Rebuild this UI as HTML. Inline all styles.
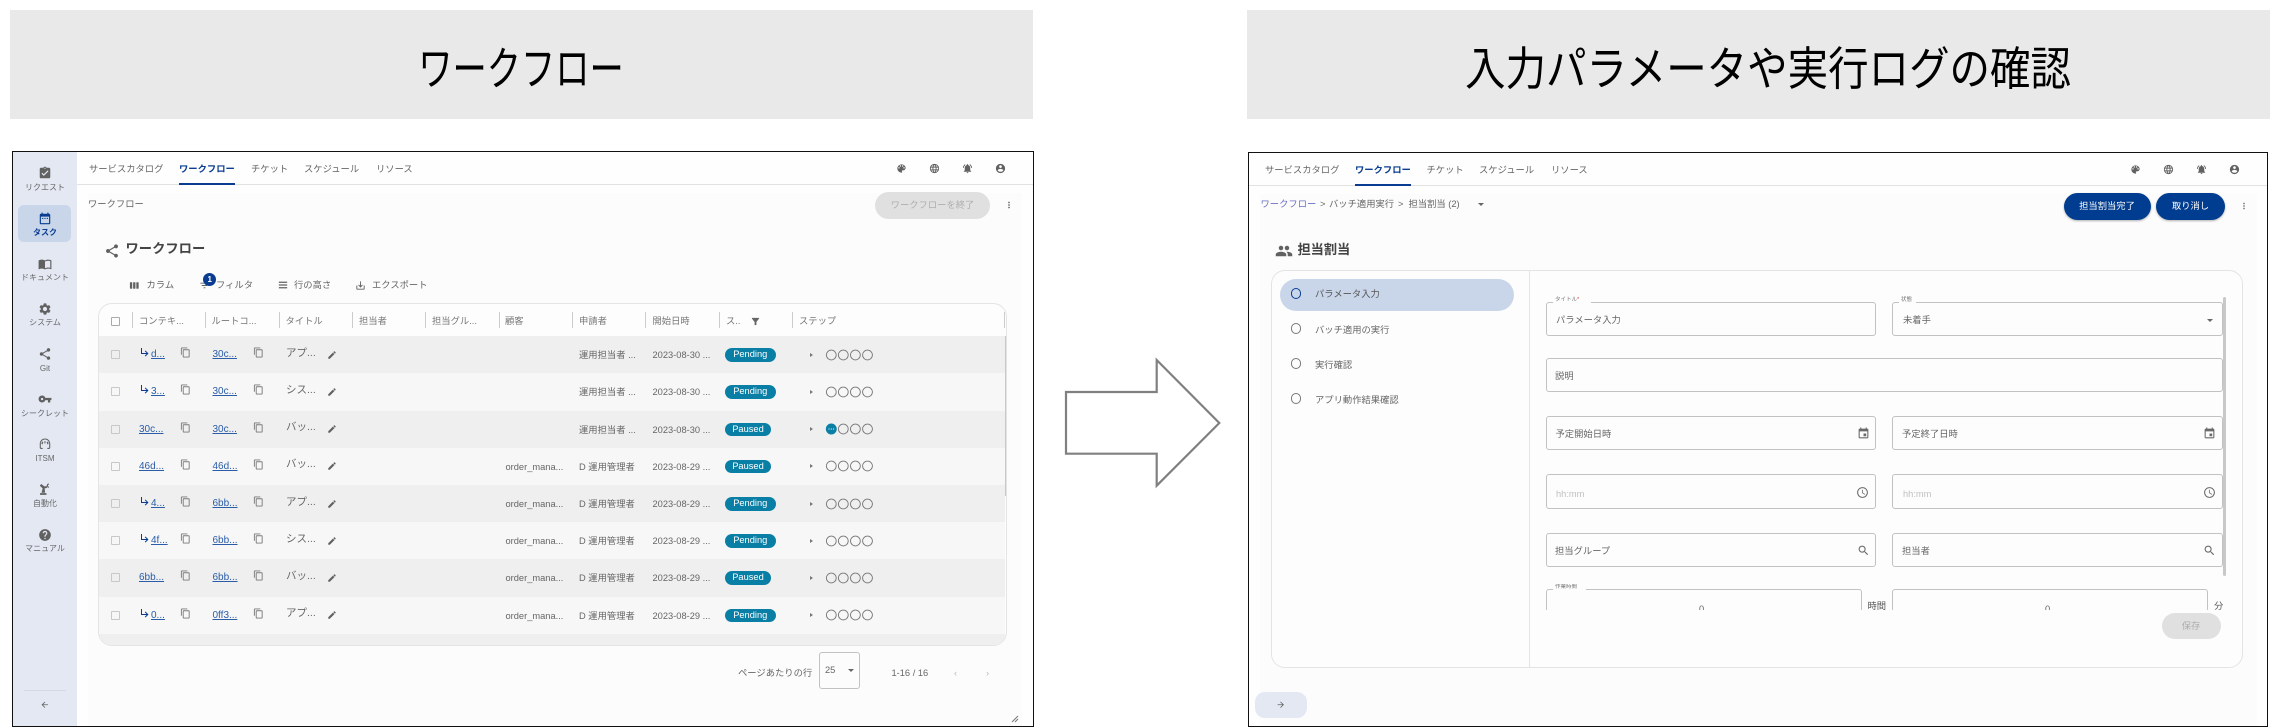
<!DOCTYPE html>
<html lang="ja">
<head>
<meta charset="utf-8">
<title>ワークフロー</title>
<style>
html,body{margin:0;padding:0;background:#fff}
body{position:relative;width:2280px;height:728px;overflow:hidden;font-family:"Liberation Sans","Noto Sans CJK JP",sans-serif;font-size:9.3px;color:#666}
div,span,svg{position:absolute;box-sizing:border-box}
svg{fill:currentColor;display:block}
.t{white-space:nowrap;line-height:12px;height:12px}
.band{background:#e9e9e9;top:10px;height:109px}
.title{white-space:nowrap;color:#000;font-size:46px;line-height:56px;height:56px;top:38px;font-family:"Noto Sans CJK JP",sans-serif;text-align:center;width:800px}
.frame{border:1.5px solid #111;top:151px;height:576px;background:#fefefe}
.side{left:13px;top:152px;width:64px;height:574px;background:#e3e8f3}
.sl{left:13px;width:64px;text-align:center;font-size:8px;color:#666;white-space:nowrap;line-height:10px;height:10px}
.si{width:14px;height:14px;left:38px;color:#616161}
.tab{top:163px;color:#666}
.act{color:#0a3d91;font-weight:bold}
.ti{width:11px;height:11px;color:#616161}
.table{left:98px;top:303px;width:909px;height:343px;border:1px solid #e4e4e4;border-radius:14px;overflow:hidden;background:#fdfdfd}
.sep{top:8px;width:1px;height:16px;background:#ccc}
.h{top:11px;color:#777}
.row{left:0;width:906px;height:37.4px}
.o{background:#efefef}.e{background:#f7f7f7}
.cb{width:9px;height:9px;left:12px;border:1px solid #c8c8c8;border-radius:1px}
.r{top:13px}
.tt{top:10.5px;left:187px;font-size:10.500px;color:#666}
.lk{color:#2a5ca8;text-decoration:underline;top:13px;font-size:10px}
.cp{width:11px;height:11px;top:11px;color:#7a7a7a}
.ed{width:10px;height:10px;left:228px;top:13.5px;color:#616161}
.ar{width:12px;height:12px;left:39.5px;top:10px;color:#0a3d91}
.chip{left:626px;top:12px;height:13.5px;border-radius:7px;background:#0a7fa6;color:#fff;text-align:center;line-height:13.5px;font-size:9.3px}
.car{left:711px;top:16.5px;width:0;height:0;border-left:3px solid #777;border-top:2.5px solid transparent;border-bottom:2.5px solid transparent}
.st{left:726px;top:12.5px;width:50px;height:12px;fill:none;stroke:#777;stroke-width:.9}
.fd{border:1px solid #c2c2c2;border-radius:3px;background:#fdfdfd}
.lbl{font-size:5.5px;line-height:7px;height:7px;white-space:nowrap;color:#777;background:#fdfdfd;padding:0 2px}
.fi{width:13px;height:13px;color:#6a6a6a}
</style>
</head>
<body>
<svg width="0" height="0" style="left:0;top:0">
<defs>
<symbol id="assign" viewBox="0 0 24 24"><path d="M19 3h-4.18C14.4 1.84 13.3 1 12 1c-1.3 0-2.4.84-2.82 2H5c-1.1 0-2 .9-2 2v14c0 1.1.9 2 2 2h14c1.1 0 2-.9 2-2V5c0-1.1-.9-2-2-2zm-7 0c.55 0 1 .45 1 1s-.45 1-1 1-1-.45-1-1 .45-1 1-1zm-2 14l-4-4 1.41-1.41L10 14.17l6.59-6.59L18 9l-8 8z"/></symbol>
<symbol id="cal" viewBox="0 0 24 24"><path d="M17 12h-5v5h5v-5zM16 1v2H8V1H6v2H5c-1.11 0-1.99.9-1.99 2L3 19c0 1.1.89 2 2 2h14c1.1 0 2-.9 2-2V5c0-1.1-.9-2-2-2h-1V1h-2zm3 18H5V8h14v11z"/></symbol>
<symbol id="cal2" viewBox="0 0 24 24"><path d="M16 1v2H8V1H6v2H5c-1.11 0-1.99.9-1.99 2L3 19c0 1.1.89 2 2 2h14c1.1 0 2-.9 2-2V5c0-1.1-.9-2-2-2h-1V1h-2zm3 18H5V8h14v11zM7 10h2v2H7zm4 0h2v2h-2zm4 0h2v2h-2z"/></symbol>
<symbol id="book" viewBox="0 0 24 24"><path d="M21 5c-1.11-.35-2.33-.5-3.5-.5-1.95 0-4.05.4-5.5 1.5-1.45-1.1-3.55-1.5-5.5-1.5S2.45 4.9 1 6v14.65c0 .25.25.5.5.5.1 0 .15-.05.25-.05C3.1 20.45 5.05 20 6.5 20c1.95 0 4.05.4 5.5 1.5 1.35-.85 3.8-1.5 5.5-1.5 1.65 0 3.35.3 4.75 1.05.1.05.15.05.25.05.25 0 .5-.25.5-.5V6c-.6-.45-1.25-.75-2-1zm0 13.5c-1.1-.35-2.3-.5-3.5-.5-1.7 0-4.15.65-5.5 1.5V8c1.35-.85 3.8-1.5 5.5-1.5 1.2 0 2.4.15 3.5.5v11.5z"/></symbol>
<symbol id="gear" viewBox="0 0 24 24"><path d="M19.14 12.94c.04-.3.06-.61.06-.94 0-.32-.02-.64-.07-.94l2.03-1.58c.18-.14.23-.41.12-.61l-1.92-3.32c-.12-.22-.37-.29-.59-.22l-2.39.96c-.5-.38-1.03-.7-1.62-.94l-.36-2.54c-.04-.24-.24-.41-.48-.41h-3.84c-.24 0-.43.17-.47.41l-.36 2.54c-.59.24-1.13.57-1.62.94l-2.39-.96c-.22-.08-.47 0-.59.22L2.74 8.87c-.12.21-.08.47.12.61l2.03 1.58c-.05.3-.09.63-.09.94s.02.64.07.94l-2.03 1.58c-.18.14-.23.41-.12.61l1.92 3.32c.12.22.37.29.59.22l2.39-.96c.5.38 1.03.7 1.62.94l.36 2.54c.05.24.24.41.48.41h3.84c.24 0 .44-.17.47-.41l.36-2.54c.59-.24 1.13-.56 1.62-.94l2.39.96c.22.08.47 0 .59-.22l1.92-3.32c.12-.22.07-.47-.12-.61l-2.01-1.58zM12 15.6c-1.98 0-3.6-1.62-3.6-3.6s1.62-3.6 3.6-3.6 3.6 1.62 3.6 3.6-1.62 3.6-3.6 3.6z"/></symbol>
<symbol id="share" viewBox="0 0 24 24"><path d="M18 16.08c-.76 0-1.44.3-1.96.77L8.91 12.7c.05-.23.09-.46.09-.7s-.04-.47-.09-.7l7.05-4.11c.54.5 1.25.81 2.04.81 1.66 0 3-1.34 3-3s-1.34-3-3-3-3 1.34-3 3c0 .24.04.47.09.7L8.04 9.81C7.5 9.31 6.79 9 6 9c-1.66 0-3 1.34-3 3s1.34 3 3 3c.79 0 1.5-.31 2.04-.81l7.12 4.16c-.05.21-.08.43-.08.65 0 1.61 1.31 2.92 2.92 2.92 1.61 0 2.92-1.31 2.92-2.92s-1.31-2.92-2.92-2.92z"/></symbol>
<symbol id="key" viewBox="0 0 24 24"><path d="M12.65 10C11.83 7.67 9.61 6 7 6c-3.31 0-6 2.69-6 6s2.69 6 6 6c2.61 0 4.83-1.67 5.65-4H17v4h4v-4h2v-4H12.65zM7 14c-1.1 0-2-.9-2-2s.9-2 2-2 2 .9 2 2-.9 2-2 2z"/></symbol>
<symbol id="help" viewBox="0 0 24 24"><path d="M12 2C6.48 2 2 6.48 2 12s4.48 10 10 10 10-4.48 10-10S17.52 2 12 2zm1 17h-2v-2h2v2zm2.07-7.75l-.9.92C13.45 12.9 13 13.5 13 15h-2v-.5c0-1.1.45-2.1 1.17-2.83l1.24-1.26c.37-.36.59-.86.59-1.41 0-1.1-.9-2-2-2s-2 .9-2 2H8c0-2.21 1.79-4 4-4s4 1.79 4 4c0 .88-.36 1.68-.93 2.25z"/></symbol>
<symbol id="pal" viewBox="0 0 24 24"><path d="M12 3c-4.97 0-9 4.03-9 9s4.03 9 9 9c.83 0 1.5-.67 1.5-1.5 0-.39-.15-.74-.39-1.01-.23-.26-.38-.61-.38-.99 0-.83.67-1.5 1.5-1.5H16c2.76 0 5-2.24 5-5 0-4.42-4.03-8-9-8zm-5.5 9c-.83 0-1.5-.67-1.5-1.5S5.67 9 6.5 9 8 9.67 8 10.5 7.33 12 6.5 12zm3-4C8.67 8 8 7.33 8 6.5S8.67 5 9.5 5s1.5.67 1.5 1.5S10.33 8 9.5 8zm5 0c-.83 0-1.5-.67-1.5-1.5S13.67 5 14.5 5s1.5.67 1.5 1.5S15.33 8 14.5 8zm3 4c-.83 0-1.5-.67-1.5-1.5S16.67 9 17.5 9s1.5.67 1.5 1.5-.67 1.5-1.5 1.5z"/></symbol>
<symbol id="globe" viewBox="0 0 24 24"><path d="M11.99 2C6.47 2 2 6.48 2 12s4.47 10 9.99 10C17.52 22 22 17.52 22 12S17.52 2 11.99 2zm6.93 6h-2.95c-.32-1.25-.78-2.45-1.38-3.56 1.84.63 3.37 1.91 4.33 3.56zM12 4.04c.83 1.2 1.48 2.53 1.91 3.96h-3.82c.43-1.43 1.08-2.76 1.91-3.96zM4.26 14C4.1 13.36 4 12.69 4 12s.1-1.36.26-2h3.38c-.08.66-.14 1.32-.14 2 0 .68.06 1.34.14 2H4.26zm.82 2h2.95c.32 1.25.78 2.45 1.38 3.56-1.84-.63-3.37-1.9-4.33-3.56zm2.95-8H5.08c.96-1.66 2.49-2.93 4.33-3.56C8.81 5.55 8.35 6.75 8.03 8zM12 19.96c-.83-1.2-1.48-2.53-1.91-3.96h3.82c-.43 1.43-1.08 2.76-1.91 3.96zM14.34 14H9.66c-.09-.66-.16-1.32-.16-2 0-.68.07-1.35.16-2h4.68c.09.65.16 1.32.16 2 0 .68-.07 1.34-.16 2zm.25 5.56c.6-1.11 1.06-2.31 1.38-3.56h2.95c-.96 1.65-2.49 2.93-4.33 3.56zM16.36 14c.08-.66.14-1.32.14-2 0-.68-.06-1.34-.14-2h3.38c.16.64.26 1.31.26 2s-.1 1.36-.26 2h-3.38z"/></symbol>
<symbol id="bell" viewBox="0 0 24 24"><path d="M7.58 4.08L6.15 2.65C3.75 4.48 2.17 7.3 2.03 10.5h2c.15-2.65 1.51-4.97 3.55-6.42zm12.39 6.42h2c-.15-3.2-1.73-6.02-4.12-7.85l-1.42 1.43c2.02 1.45 3.39 3.77 3.54 6.42zM18 11c0-3.07-1.64-5.64-4.5-6.32V4c0-.83-.67-1.5-1.5-1.5s-1.5.67-1.5 1.5v.68C7.63 5.36 6 7.92 6 11v5l-2 2v1h16v-1l-2-2v-5zm-6 11c.14 0 .27-.01.4-.04.65-.14 1.18-.58 1.44-1.18.1-.24.15-.5.15-.78h-4c.01 1.1.9 2 2.01 2z"/></symbol>
<symbol id="acct" viewBox="0 0 24 24"><path d="M12 2C6.48 2 2 6.48 2 12s4.48 10 10 10 10-4.48 10-10S17.52 2 12 2zm0 3c1.66 0 3 1.34 3 3s-1.34 3-3 3-3-1.34-3-3 1.34-3 3-3zm0 14.2c-2.5 0-4.71-1.28-6-3.22.03-1.99 4-3.08 6-3.08 1.99 0 5.97 1.09 6 3.08-1.29 1.94-3.5 3.22-6 3.22z"/></symbol>
<symbol id="week" viewBox="0 0 24 24"><path d="M6 5H3c-.55 0-1 .45-1 1v12c0 .55.45 1 1 1h3c.55 0 1-.45 1-1V6c0-.55-.45-1-1-1zm14 0h-3c-.55 0-1 .45-1 1v12c0 .55.45 1 1 1h3c.55 0 1-.45 1-1V6c0-.55-.45-1-1-1zm-7 0h-3c-.55 0-1 .45-1 1v12c0 .55.45 1 1 1h3c.55 0 1-.45 1-1V6c0-.55-.45-1-1-1z"/></symbol>
<symbol id="flist" viewBox="0 0 24 24"><path d="M10 18h4v-2h-4v2zM3 6v2h18V6H3zm3 7h12v-2H6v2z"/></symbol>
<symbol id="funnel" viewBox="0 0 24 24"><path d="M4.25 5.61C6.27 8.2 10 13 10 13v6c0 .55.45 1 1 1h2c.55 0 1-.45 1-1v-6s3.72-4.8 5.74-7.39c.51-.66.04-1.61-.79-1.61H5.04c-.83 0-1.3.95-.79 1.61z"/></symbol>
<symbol id="dens" viewBox="0 0 24 24"><path d="M2 20h20v-3H2v3zm0-6.500h20v-3H2v3zM2 4v3h20V4H2z"/></symbol>
<symbol id="dl" viewBox="0 0 24 24"><path d="M19 12v7H5v-7H3v7c0 1.1.9 2 2 2h14c1.1 0 2-.9 2-2v-7h-2zm-6 .67l2.59-2.58L17 11.5l-5 5-5-5 1.41-1.41L11 12.67V3h2z"/></symbol>
<symbol id="copy" viewBox="0 0 24 24"><path d="M16 1H4c-1.1 0-2 .9-2 2v14h2V3h12V1zm3 4H8c-1.1 0-2 .9-2 2v14c0 1.1.9 2 2 2h11c1.1 0 2-.9 2-2V7c0-1.1-.9-2-2-2zm0 16H8V7h11v14z"/></symbol>
<symbol id="edit" viewBox="0 0 24 24"><path d="M3 17.250V21h3.750L17.810 9.940l-3.750-3.750L3 17.250zM20.710 7.040c.39-.39.39-1.020 0-1.410l-2.340-2.340c-.39-.39-1.020-.39-1.410 0l-1.830 1.830 3.750 3.750 1.830-1.830z"/></symbol>
<symbol id="sub" viewBox="0 0 24 24"><path d="M19 15l-6 6-1.420-1.420L15.170 16H4V4h2v10h9.170l-3.590-3.580L13 9l6 6z"/></symbol>
<symbol id="ppl" viewBox="0 0 24 24"><path d="M16 11c1.660 0 2.990-1.340 2.990-3S17.660 5 16 5c-1.660 0-3 1.340-3 3s1.340 3 3 3zm-8 0c1.660 0 2.990-1.340 2.990-3S9.660 5 8 5C6.340 5 5 6.340 5 8s1.340 3 3 3zm0 2c-2.330 0-7 1.170-7 3.500V19h14v-2.500c0-2.330-4.670-3.500-7-3.500zm8 0c-.290 0-.620.020-.970.050 1.160.840 1.970 1.970 1.970 3.450V19h6v-2.500c0-2.330-4.670-3.500-7-3.500z"/></symbol>
<symbol id="clock" viewBox="0 0 24 24"><path d="M11.990 2C6.470 2 2 6.480 2 12s4.470 10 9.990 10C17.520 22 22 17.520 22 12S17.520 2 11.990 2zM12 20c-4.420 0-8-3.580-8-8s3.580-8 8-8 8 3.580 8 8-3.580 8-8 8zm.5-13H11v6l5.250 3.150.750-1.230-4.500-2.670z"/></symbol>
<symbol id="search" viewBox="0 0 24 24"><path d="M15.500 14h-.790l-.280-.270C15.410 12.590 16 11.110 16 9.500 16 5.910 13.090 3 9.500 3S3 5.910 3 9.500 5.910 16 9.500 16c1.610 0 3.090-.590 4.230-1.570l.270.280v.790l5 4.990L20.490 19l-4.990-5zm-6 0C7.010 14 5 11.990 5 9.500S7.010 5 9.500 5 14 7.010 14 9.500 11.990 14 9.500 14z"/></symbol>
<symbol id="more" viewBox="0 0 24 24"><path d="M12 8c1.100 0 2-.9 2-2s-.9-2-2-2-2 .9-2 2 .9 2 2 2zm0 2c-1.100 0-2 .9-2 2s.9 2 2 2 2-.9 2-2-.9-2-2-2zm0 6c-1.100 0-2 .9-2 2s.9 2 2 2 2-.9 2-2-.9-2-2-2z"/></symbol>
<symbol id="back" viewBox="0 0 24 24"><path d="M20 11H7.830l5.590-5.590L12 4l-8 8 8 8 1.410-1.410L7.830 13H20v-2z"/></symbol>
<symbol id="fwd" viewBox="0 0 24 24"><path d="M12 4l-1.410 1.410L16.170 11H4v2h12.170l-5.580 5.590L12 20l8-8z"/></symbol>
<symbol id="head" viewBox="0 0 24 24"><path d="M12 2.500C6.800 2.500 3 6.600 3 12v6c0 1.400 1 2.500 2.500 2.500H8v-1.800H5.500c-.4 0-.7-.3-.7-.7v-6C4.800 7.600 8 4.300 12 4.300s7.200 3.300 7.200 7.700v6c0 .4-.3.700-.7.700H16v1.800h2.500c1.500 0 2.500-1.100 2.500-2.500v-6c0-5.400-3.800-9.500-9-9.500zM7.500 7.800C6.500 9 6 10.400 6 12l2 .8c0-1.300.5-2.500 1.200-3.500zm9 0l-1.700 1.500c.7 1 1.200 2.200 1.200 3.500l2-.8c0-1.600-.5-3-1.500-4.200zM12 6.800c-.5 0-.9.400-.9.900v2.600c0 .5.400.9.900.9s.9-.4.900-.9V7.700c0-.5-.4-.9-.9-.9z"/></symbol>
<symbol id="robot" viewBox="0 0 24 24"><path d="M3.500 19h11v3h-11zM6 18.500L8 11 3 6.500 5.500 3.500l5.500 4 4.500-.5v3l-4 1L12 18.500zM18.500 2.500a3.700 3.700 0 1 0 .2 7.400l.4-1.700a2 2 0 1 1-.2-4z"/></symbol>
<symbol id="steps" viewBox="0 0 50 12"><circle cx="6.300" cy="6" r="4.900"/><circle cx="18.300" cy="6" r="4.900"/><circle cx="30.400" cy="6" r="4.900"/><circle cx="42.500" cy="6" r="4.900"/></symbol>
<symbol id="steps2" viewBox="0 0 50 12"><circle cx="6.300" cy="6" r="5" fill="#0a7fa6" stroke="#0a7fa6"/><path d="M3.500 6h1M5.800 6h1M8.100 6h1" stroke="#fff" stroke-width="1"/><circle cx="18.300" cy="6" r="4.900"/><circle cx="30.400" cy="6" r="4.900"/><circle cx="42.500" cy="6" r="4.900"/></symbol>
</defs>
</svg>

<!-- title bands -->
<div class="band" style="left:10px;width:1023px"></div>
<div class="title" style="left:121px;transform:scaleX(.745)">ワークフロー</div>
<div class="band" style="left:1247px;width:1023px"></div>
<div class="title" style="left:1368px;transform:scaleX(.88)">入力パラメータや実行ログの確認</div>

<!-- middle arrow -->
<svg style="left:1060px;top:355px;fill:#fff;stroke:#808080;stroke-width:2.200" width="165" height="136" viewBox="1060 355 165 136"><polygon points="1066,392 1156.700,392 1156.700,360 1219.300,423 1156.700,485.700 1156.700,453.700 1066,453.700"/></svg>

<!-- LEFT FRAME -->
<div class="frame" style="left:12px;width:1022px"></div>
<div style="left:88px;top:193px;width:934px;height:533px;background:#fcfcfc"></div>
<div class="side"></div>
<div style="left:77px;top:184px;width:956px;height:1px;background:#e2e2e2"></div>

<svg class="si" style="top:166px"><use href="#assign"/></svg>
<div class="sl" style="top:183px">リクエスト</div>
<div style="left:18px;top:205px;width:53px;height:37px;background:#c9d6ea;border-radius:6px"></div>
<svg class="si" style="top:212px;color:#0a3d91"><use href="#cal2"/></svg>
<div class="sl" style="top:228px;color:#0a3d91;font-weight:bold">タスク</div>
<svg class="si" style="top:257px"><use href="#book"/></svg>
<div class="sl" style="top:273px">ドキュメント</div>
<svg class="si" style="top:302px"><use href="#gear"/></svg>
<div class="sl" style="top:318px">システム</div>
<svg class="si" style="top:347px"><use href="#share"/></svg>
<div class="sl" style="top:364px">Git</div>
<svg class="si" style="top:392px"><use href="#key"/></svg>
<div class="sl" style="top:409px">シークレット</div>
<svg class="si" style="top:437px"><use href="#head"/></svg>
<div class="sl" style="top:454px">ITSM</div>
<svg class="si" style="top:482px"><use href="#robot"/></svg>
<div class="sl" style="top:499px">自動化</div>
<svg class="si" style="top:528px"><use href="#help"/></svg>
<div class="sl" style="top:544px">マニュアル</div>
<div style="left:24px;top:690px;width:42px;height:1px;background:#d4d8e2"></div>
<svg style="left:40px;top:700px;width:9.500px;height:9.500px;color:#616161"><use href="#back"/></svg>

<div class="t tab" style="left:89px">サービスカタログ</div>
<div class="t tab act" style="left:179px">ワークフロー</div>
<div style="left:179px;top:182.500px;width:56px;height:2px;background:#0a3d91"></div>
<div class="t tab" style="left:251px">チケット</div>
<div class="t tab" style="left:304px">スケジュール</div>
<div class="t tab" style="left:376px">リソース</div>

<svg class="ti" style="left:895.500px;top:163px"><use href="#pal"/></svg>
<svg class="ti" style="left:928.500px;top:163px"><use href="#globe"/></svg>
<svg class="ti" style="left:962px;top:163px"><use href="#bell"/></svg>
<svg class="ti" style="left:995px;top:163px"><use href="#acct"/></svg>

<div class="t" style="left:88px;top:198px">ワークフロー</div>
<div style="left:875px;top:192px;width:115px;height:26.500px;border-radius:14px;background:#e0e0e0;color:#aeaeae;text-align:center;line-height:27px">ワークフローを終了</div>
<svg style="left:1004px;top:200px;width:10px;height:10px;color:#666"><use href="#more"/></svg>

<svg style="left:103.500px;top:242.500px;width:16px;height:16px;color:#616161"><use href="#share"/></svg>
<div class="t" style="left:125.500px;top:241px;font-size:13.300px;line-height:15px;height:15px;font-weight:bold;color:#444">ワークフロー</div>

<svg style="left:129px;top:279.500px;width:11px;height:11px;color:#616161"><use href="#week"/></svg>
<div class="t" style="left:146.500px;top:279px;color:#666">カラム</div>
<svg style="left:198.500px;top:279.500px;width:11px;height:11px;color:#616161"><use href="#flist"/></svg>
<div class="t" style="left:216px;top:279px;color:#666">フィルタ</div>
<div style="left:203.200px;top:272.500px;width:13px;height:13px;border-radius:50%;background:#0a3d91;color:#fff;text-align:center;font-size:8px;line-height:13px;font-weight:bold">1</div>
<svg style="left:277.500px;top:279.500px;width:10px;height:10px;color:#616161"><use href="#dens"/></svg>
<div class="t" style="left:294px;top:279px;color:#666">行の高さ</div>
<svg style="left:355px;top:279.500px;width:11px;height:11px;color:#616161"><use href="#dl"/></svg>
<div class="t" style="left:372px;top:279px;color:#666">エクスポート</div>

<div class="table">
<div class="cb" style="top:12.500px;border-color:#aaa"></div>
<div class="sep" style="left:33px"></div><div class="sep" style="left:106px"></div><div class="sep" style="left:179.500px"></div><div class="sep" style="left:253px"></div><div class="sep" style="left:326px"></div><div class="sep" style="left:399.500px"></div><div class="sep" style="left:473px"></div><div class="sep" style="left:546px"></div><div class="sep" style="left:619.500px"></div><div class="sep" style="left:693px"></div><div class="sep" style="left:904.500px"></div>
<div class="t h" style="left:40px">コンテキ...</div>
<div class="t h" style="left:112.500px">ルートコ...</div>
<div class="t h" style="left:186.500px">タイトル</div>
<div class="t h" style="left:260px">担当者</div>
<div class="t h" style="left:333px">担当グル...</div>
<div class="t h" style="left:406px">顧客</div>
<div class="t h" style="left:480px">申請者</div>
<div class="t h" style="left:553.500px">開始日時</div>
<div class="t h" style="left:627px">ス..</div>
<svg style="left:651px;top:11.500px;width:11px;height:11px;color:#666"><use href="#funnel"/></svg>
<div class="t h" style="left:700px">ステップ</div>

<div class="row o" style="top:32px">
<div class="cb" style="top:14px"></div><svg class="ar"><use href="#sub"/></svg><div class="t lk" style="left:52px">d...</div><svg class="cp" style="left:81px"><use href="#copy"/></svg><div class="t lk" style="left:113.500px">30c...</div><svg class="cp" style="left:154px"><use href="#copy"/></svg><div class="t tt">アプ...</div><svg class="ed"><use href="#edit"/></svg>
<div class="t r" style="left:480px">運用担当者 ...</div><div class="t r" style="left:553.500px">2023-08-30 ...</div><div class="chip" style="width:50.500px">Pending</div><div class="car"></div><svg class="st"><use href="#steps"/></svg></div>

<div class="row e" style="top:69.300px">
<div class="cb" style="top:14px"></div><svg class="ar"><use href="#sub"/></svg><div class="t lk" style="left:52px">3...</div><svg class="cp" style="left:81px"><use href="#copy"/></svg><div class="t lk" style="left:113.500px">30c...</div><svg class="cp" style="left:154px"><use href="#copy"/></svg><div class="t tt">シス...</div><svg class="ed"><use href="#edit"/></svg>
<div class="t r" style="left:480px">運用担当者 ...</div><div class="t r" style="left:553.500px">2023-08-30 ...</div><div class="chip" style="width:50.500px">Pending</div><div class="car"></div><svg class="st"><use href="#steps"/></svg></div>

<div class="row o" style="top:106.500px">
<div class="cb" style="top:14px"></div><div class="t lk" style="left:40px">30c...</div><svg class="cp" style="left:81px"><use href="#copy"/></svg><div class="t lk" style="left:113.500px">30c...</div><svg class="cp" style="left:154px"><use href="#copy"/></svg><div class="t tt">バッ...</div><svg class="ed"><use href="#edit"/></svg>
<div class="t r" style="left:480px">運用担当者 ...</div><div class="t r" style="left:553.500px">2023-08-30 ...</div><div class="chip" style="width:46px">Paused</div><div class="car"></div><svg class="st"><use href="#steps2"/></svg></div>

<div class="row e" style="top:143.700px">
<div class="cb" style="top:14px"></div><div class="t lk" style="left:40px">46d...</div><svg class="cp" style="left:81px"><use href="#copy"/></svg><div class="t lk" style="left:113.500px">46d...</div><svg class="cp" style="left:154px"><use href="#copy"/></svg><div class="t tt">バッ...</div><svg class="ed"><use href="#edit"/></svg>
<div class="t r" style="left:406.500px">order_mana...</div><div class="t r" style="left:480px">D 運用管理者</div><div class="t r" style="left:553.500px">2023-08-29 ...</div><div class="chip" style="width:46px">Paused</div><div class="car"></div><svg class="st"><use href="#steps"/></svg></div>

<div class="row o" style="top:181px">
<div class="cb" style="top:14px"></div><svg class="ar"><use href="#sub"/></svg><div class="t lk" style="left:52px">4...</div><svg class="cp" style="left:81px"><use href="#copy"/></svg><div class="t lk" style="left:113.500px">6bb...</div><svg class="cp" style="left:154px"><use href="#copy"/></svg><div class="t tt">アプ...</div><svg class="ed"><use href="#edit"/></svg>
<div class="t r" style="left:406.500px">order_mana...</div><div class="t r" style="left:480px">D 運用管理者</div><div class="t r" style="left:553.500px">2023-08-29 ...</div><div class="chip" style="width:50.500px">Pending</div><div class="car"></div><svg class="st"><use href="#steps"/></svg></div>

<div class="row e" style="top:218.200px">
<div class="cb" style="top:14px"></div><svg class="ar"><use href="#sub"/></svg><div class="t lk" style="left:52px">4f...</div><svg class="cp" style="left:81px"><use href="#copy"/></svg><div class="t lk" style="left:113.500px">6bb...</div><svg class="cp" style="left:154px"><use href="#copy"/></svg><div class="t tt">シス...</div><svg class="ed"><use href="#edit"/></svg>
<div class="t r" style="left:406.500px">order_mana...</div><div class="t r" style="left:480px">D 運用管理者</div><div class="t r" style="left:553.500px">2023-08-29 ...</div><div class="chip" style="width:50.500px">Pending</div><div class="car"></div><svg class="st"><use href="#steps"/></svg></div>

<div class="row o" style="top:255.400px">
<div class="cb" style="top:14px"></div><div class="t lk" style="left:40px">6bb...</div><svg class="cp" style="left:81px"><use href="#copy"/></svg><div class="t lk" style="left:113.500px">6bb...</div><svg class="cp" style="left:154px"><use href="#copy"/></svg><div class="t tt">バッ...</div><svg class="ed"><use href="#edit"/></svg>
<div class="t r" style="left:406.500px">order_mana...</div><div class="t r" style="left:480px">D 運用管理者</div><div class="t r" style="left:553.500px">2023-08-29 ...</div><div class="chip" style="width:46px">Paused</div><div class="car"></div><svg class="st"><use href="#steps"/></svg></div>

<div class="row e" style="top:292.600px">
<div class="cb" style="top:14px"></div><svg class="ar"><use href="#sub"/></svg><div class="t lk" style="left:52px">0...</div><svg class="cp" style="left:81px"><use href="#copy"/></svg><div class="t lk" style="left:113.500px">0ff3...</div><svg class="cp" style="left:154px"><use href="#copy"/></svg><div class="t tt">アプ...</div><svg class="ed"><use href="#edit"/></svg>
<div class="t r" style="left:406.500px">order_mana...</div><div class="t r" style="left:480px">D 運用管理者</div><div class="t r" style="left:553.500px">2023-08-29 ...</div><div class="chip" style="width:50.500px">Pending</div><div class="car"></div><svg class="st"><use href="#steps"/></svg></div>

<div class="row o" style="top:330px"></div>
<div style="left:906px;top:32px;width:2px;height:160px;background:#c8c8c8"></div>
</div>

<div class="t" style="left:738px;top:667px">ページあたりの行</div>
<div style="left:818.500px;top:651.500px;width:41px;height:37px;border:1px solid #c2c2c2;border-radius:3px"></div>
<div class="t" style="left:825px;top:664px">25</div>
<div style="left:847.500px;top:668.500px;width:0;height:0;border-top:3.500px solid #666;border-left:3.500px solid transparent;border-right:3.500px solid transparent"></div>
<div class="t" style="left:891.500px;top:667px">1-16 / 16</div>
<div class="t" style="left:954px;top:667px;color:#bbb">‹</div>
<div class="t" style="left:986px;top:667px;color:#bbb">›</div>
<svg style="left:1011px;top:715px;stroke:#777;stroke-width:1;fill:none" width="8" height="8"><path d="M1 7L7 1M4 7L7 4"/></svg>

<!-- RIGHT FRAME -->
<div class="frame" style="left:1248px;top:152px;width:1020px;height:575px"></div>
<div style="left:1260px;top:194px;width:997px;height:532px;background:#fcfcfc"></div>
<div style="left:1249px;top:185px;width:1018px;height:1px;background:#e2e2e2"></div>

<div class="t tab" style="left:1265px;top:164px">サービスカタログ</div>
<div class="t tab act" style="left:1355px;top:164px">ワークフロー</div>
<div style="left:1355px;top:183.500px;width:56px;height:2px;background:#0a3d91"></div>
<div class="t tab" style="left:1426.500px;top:164px">チケット</div>
<div class="t tab" style="left:1479px;top:164px">スケジュール</div>
<div class="t tab" style="left:1551px;top:164px">リソース</div>

<svg class="ti" style="left:2130px;top:164px"><use href="#pal"/></svg>
<svg class="ti" style="left:2162.500px;top:164px"><use href="#globe"/></svg>
<svg class="ti" style="left:2196px;top:164px"><use href="#bell"/></svg>
<svg class="ti" style="left:2229px;top:164px"><use href="#acct"/></svg>

<div class="t" style="left:1260.500px;top:198px;color:#6a6fc4">ワークフロー</div>
<div class="t" style="left:1320px;top:198px">&gt;</div>
<div class="t" style="left:1329px;top:198px">バッチ適用実行</div>
<div class="t" style="left:1398px;top:198px">&gt;</div>
<div class="t" style="left:1408.500px;top:198px">担当割当 (2)</div>
<div style="left:1477.500px;top:202.500px;width:0;height:0;border-top:3.500px solid #666;border-left:3.500px solid transparent;border-right:3.500px solid transparent"></div>

<div style="left:2063.500px;top:192.500px;width:87px;height:27px;border-radius:14px;background:#003c8f;color:#fff;text-align:center;line-height:27px;box-shadow:0 1px 2px rgba(0,0,0,.3)">担当割当完了</div>
<div style="left:2156px;top:192.500px;width:69px;height:27px;border-radius:14px;background:#003c8f;color:#fff;text-align:center;line-height:27px;box-shadow:0 1px 2px rgba(0,0,0,.3)">取り消し</div>
<svg style="left:2238.500px;top:201px;width:10px;height:10px;color:#777"><use href="#more"/></svg>

<svg style="left:1275px;top:241.500px;width:18px;height:18px;color:#616161"><use href="#ppl"/></svg>
<div class="t" style="left:1297.500px;top:241.500px;font-size:13.200px;line-height:15px;height:15px;font-weight:bold;color:#444">担当割当</div>

<div style="left:1271px;top:270px;width:972px;height:398px;border:1px solid #e4e4e4;border-radius:14px;background:#fdfdfd"></div>
<div style="left:1529px;top:270px;width:1px;height:398px;background:#e4e4e4"></div>

<div style="left:1279.500px;top:278.500px;width:234.500px;height:32px;border-radius:16px;background:#c9d6ea"></div>
<div style="left:1290.500px;top:288px;width:10.500px;height:10.500px;border:1.200px solid #0a3d91;border-radius:50%"></div>
<div class="t" style="left:1315px;top:288px;color:#555">パラメータ入力</div>
<div style="left:1290.500px;top:323px;width:10.500px;height:10.500px;border:1.200px solid #777;border-radius:50%"></div>
<div class="t" style="left:1315px;top:323.500px">バッチ適用の実行</div>
<div style="left:1290.500px;top:358px;width:10.500px;height:10.500px;border:1.200px solid #777;border-radius:50%"></div>
<div class="t" style="left:1315px;top:358.500px">実行確認</div>
<div style="left:1290.500px;top:393px;width:10.500px;height:10.500px;border:1.200px solid #777;border-radius:50%"></div>
<div class="t" style="left:1315px;top:394px">アプリ動作結果確認</div>

<!-- form rows -->
<div class="fd" style="left:1546px;top:302px;width:330px;height:34px"></div>
<div class="lbl" style="left:1553px;top:296.500px;width:38px">タイトル<span style="position:static;color:#d33">*</span></div>
<div class="t" style="left:1556px;top:314px">パラメータ入力</div>

<div class="fd" style="left:1892px;top:302px;width:330.500px;height:34px"></div>
<div class="lbl" style="left:1899px;top:296.500px;width:17px">状態</div>
<div class="t" style="left:1903px;top:314px">未着手</div>
<div style="left:2206.500px;top:318.500px;width:0;height:0;border-top:3.500px solid #666;border-left:3.500px solid transparent;border-right:3.500px solid transparent"></div>

<div class="fd" style="left:1546px;top:358px;width:676.500px;height:33.500px"></div>
<div class="t" style="left:1555px;top:369.500px">説明</div>

<div class="fd" style="left:1546px;top:416px;width:330px;height:34px"></div>
<div class="t" style="left:1555.500px;top:427.500px">予定開始日時</div>
<svg class="fi" style="left:1856.500px;top:426.500px"><use href="#cal"/></svg>
<div class="fd" style="left:1892px;top:416px;width:330.500px;height:34px"></div>
<div class="t" style="left:1902px;top:427.500px">予定終了日時</div>
<svg class="fi" style="left:2202.500px;top:426.500px"><use href="#cal"/></svg>

<div class="fd" style="left:1546px;top:474px;width:330px;height:34.500px"></div>
<div class="t" style="left:1556px;top:488px;color:#c0c0c0">hh:mm</div>
<svg class="fi" style="left:1856px;top:486px"><use href="#clock"/></svg>
<div class="fd" style="left:1892px;top:474px;width:330.500px;height:34.500px"></div>
<div class="t" style="left:1903px;top:488px;color:#c0c0c0">hh:mm</div>
<svg class="fi" style="left:2202.500px;top:486px"><use href="#clock"/></svg>

<div class="fd" style="left:1546px;top:533px;width:330px;height:33.500px"></div>
<div class="t" style="left:1555px;top:544.500px">担当グループ</div>
<svg class="fi" style="left:1856.500px;top:544px"><use href="#search"/></svg>
<div class="fd" style="left:1892px;top:533px;width:330.500px;height:33.500px"></div>
<div class="t" style="left:1902px;top:544.500px">担当者</div>
<svg class="fi" style="left:2202.500px;top:544px"><use href="#search"/></svg>

<div style="left:1546px;top:584px;width:680px;height:26px;overflow:hidden">
  <div class="fd" style="left:0;top:4.500px;width:316px;height:34px"></div>
  <div class="lbl" style="left:7px;top:0;width:33px">作業時間</div>
  <div class="t" style="left:153px;top:19px">0</div>
  <div class="t" style="left:321.500px;top:15.500px;color:#555">時間</div>
  <div class="fd" style="left:345.500px;top:4.500px;width:316.500px;height:34px"></div>
  <div class="t" style="left:499px;top:19px">0</div>
  <div class="t" style="left:668px;top:15.500px;color:#555">分</div>
</div>

<div style="left:2222.500px;top:296.500px;width:3.500px;height:279.500px;background:#c8c8c8;border-radius:2px"></div>

<div style="left:2161.500px;top:612.500px;width:59px;height:26.500px;border-radius:14px;background:#e0e0e0;color:#aeaeae;text-align:center;line-height:27px">保存</div>

<div style="left:1254.500px;top:691.500px;width:52.500px;height:26.500px;border-radius:10px;background:#e3e8f3"></div>
<svg style="left:1276px;top:700px;width:9.500px;height:9.500px;color:#616161"><use href="#fwd"/></svg>
</body>
</html>
